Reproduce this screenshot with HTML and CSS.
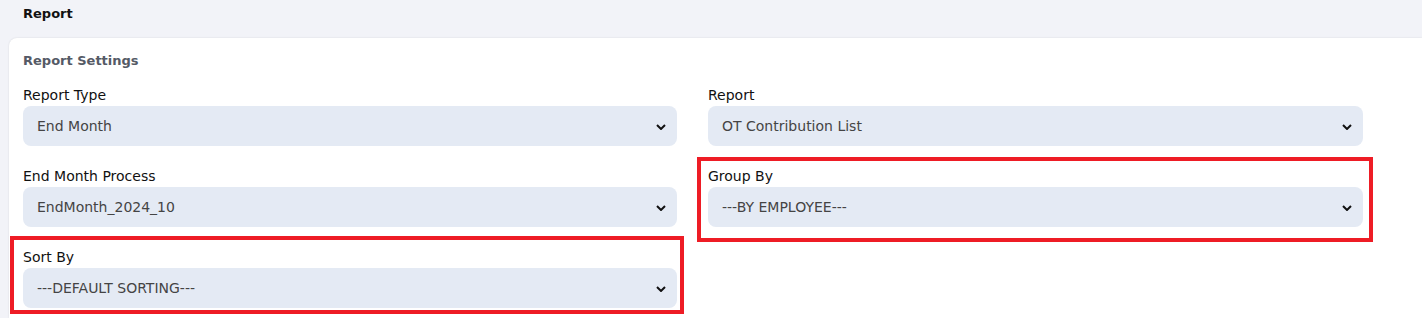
FILE: index.html
```html
<!DOCTYPE html>
<html>
<head>
<meta charset="utf-8">
<link rel="stylesheet" href="styles.css">
</head>
<body>
<div class="topbar">Report</div>
<div class="card">
  <div class="card-title">Report Settings</div>
  <div class="grid">
    <div class="field">
      <label class="label">Report Type</label>
      <div class="select"><span>End Month</span><svg class="chev" viewBox="0 0 10 6"><path d="M1 1l4 4 4-4" fill="none" stroke="#111" stroke-width="2"/></svg></div>
    </div>
    <div class="field">
      <label class="label">Report</label>
      <div class="select"><span>OT Contribution List</span><svg class="chev" viewBox="0 0 10 6"><path d="M1 1l4 4 4-4" fill="none" stroke="#111" stroke-width="2"/></svg></div>
    </div>
    <div class="field">
      <label class="label">End Month Process</label>
      <div class="select"><span>EndMonth_2024_10</span><svg class="chev" viewBox="0 0 10 6"><path d="M1 1l4 4 4-4" fill="none" stroke="#111" stroke-width="2"/></svg></div>
    </div>
    <div class="field">
      <label class="label">Group By</label>
      <div class="select"><span>---BY EMPLOYEE---</span><svg class="chev" viewBox="0 0 10 6"><path d="M1 1l4 4 4-4" fill="none" stroke="#111" stroke-width="2"/></svg></div>
    </div>
    <div class="field">
      <label class="label">Sort By</label>
      <div class="select"><span>---DEFAULT SORTING---</span><svg class="chev" viewBox="0 0 10 6"><path d="M1 1l4 4 4-4" fill="none" stroke="#111" stroke-width="2"/></svg></div>
    </div>
  </div>
  <div class="mark mark-group"></div>
  <div class="mark mark-sort"></div>
</div>
</body>
</html>
```
FILE: styles.css
```css
html, body {
  margin: 0;
  padding: 0;
  background: #f2f3f8;
  font-family: "DejaVu Sans", "Noto Sans", sans-serif;
  overflow: hidden;
  height: 318px;
}
.topbar {
  height: 30px;
  padding-left: 23px;
  line-height: 28px;
  font-size: 13px;
  font-weight: bold;
  color: #111;
}
.card {
  position: relative;
  margin-top: 8px;
  margin-left: 9px;
  background: #fff;
  border-radius: 8px 0 0 0;
  box-shadow: 0 0 2px rgba(0,0,0,0.12);
  padding: 14px 0 0 14px;
  height: 280px;
  box-sizing: border-box;
}
.card-title {
  font-size: 13px;
  font-weight: 600;
  color: #555a66;
  line-height: 18px;
  margin-bottom: 16px;
}
.grid {
  display: grid;
  grid-template-columns: 654px 655px;
  column-gap: 31px;
  row-gap: 21px;
}
.label {
  display: block;
  font-size: 14px;
  color: #111;
  line-height: 18px;
  margin-bottom: 2px;
}
.select {
  height: 40px;
  border-radius: 8px;
  background: #e4eaf4;
  display: flex;
  align-items: center;
  justify-content: space-between;
  padding: 0 11px 0 14px;
  box-sizing: border-box;
  font-size: 14px;
  color: #444;
}
.chev {
  width: 10px;
  height: 6px;
  margin-top: 2px;
}
.mark {
  position: absolute;
  border: 4px solid #ee1c25;
  box-sizing: border-box;
}
.mark-group {
  left: 688px;
  top: 119px;
  width: 676px;
  height: 85px;
}
.mark-sort {
  left: 1px;
  top: 198px;
  width: 674px;
  height: 78px;
}
```
